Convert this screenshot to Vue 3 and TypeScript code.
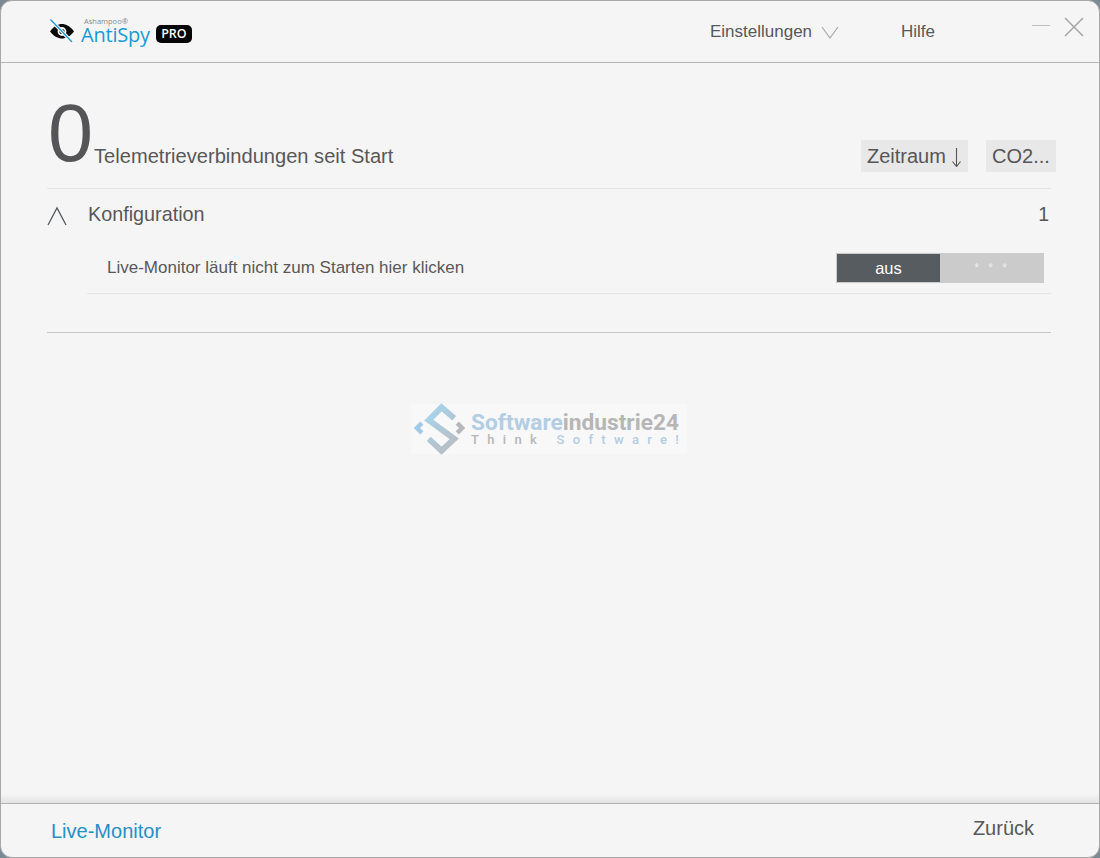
<script setup lang="ts">
const title = 'Telemetrieverbindungen seit Start'
</script>

<template>
  <div class="window">
    <header class="header">
      <div class="logo">
        <svg class="eye" width="26" height="26" viewBox="0 0 26 26">
          <path d="M1 13.500C5 8 9 6 13 6s8 2 12 7.500c-4 5-8 7-12 7S5 18.500 1 13.500Z" fill="#0b0b0b" />
          <circle cx="13" cy="13.500" r="4.400" fill="#f5f5f5" />
          <circle cx="13" cy="13.500" r="2.600" fill="#0b0b0b" />
          <path d="M1.500 1.500 23 24" stroke="#f5f5f5" stroke-width="3.500" />
          <path d="M1.500 1.500 23 24" stroke="#1b9ad6" stroke-width="1.300" />
        </svg>
        <div class="logo-text">
          <span class="brand">Ashampoo®</span>
          <span class="product">AntiSpy</span>
        </div>
        <span class="pro">PRO</span>
      </div>
      <nav class="nav">
        <span class="nav-item settings">Einstellungen
          <svg width="18" height="13" viewBox="0 0 18 13"><path d="M1 1l8 11 8-11" fill="none" stroke="#a9a9a9" stroke-width="1.200" /></svg>
        </span>
        <span class="nav-item">Hilfe</span>
      </nav>
      <div class="controls">
        <span class="minimize"></span>
        <svg width="20" height="20" viewBox="0 0 20 20"><path d="M1 1l18 18M19 1 1 19" fill="none" stroke="#a5a5a5" stroke-width="1.500" /></svg>
      </div>
    </header>

    <main class="main">
      <section class="summary">
        <span class="count">0</span>
        <span class="title">{{ title }}</span>
        <div class="actions">
          <button class="action zeitraum">Zeitraum
            <svg width="11" height="19" viewBox="0 0 11 19"><path d="M5.500 0v18M1.500 13.500l4 5 4-5" fill="none" stroke="#555558" stroke-width="1.100" /></svg>
          </button>
          <button class="action co2">CO2...</button>
        </div>
      </section>

      <section class="group">
        <div class="group-head">
          <svg class="caret" width="20" height="20" viewBox="0 0 20 20"><path d="M1 19 10 2l9 17" fill="none" stroke="#555a5d" stroke-width="1.300" /></svg>
          <span class="group-name">Konfiguration</span>
          <span class="group-count">1</span>
        </div>
        <div class="row">
          <span class="row-label">Live-Monitor läuft nicht zum Starten hier klicken</span>
          <div class="toggle">
            <span class="toggle-off">aus</span>
            <span class="toggle-on">* * *</span>
          </div>
        </div>
      </section>
      <div class="rule"></div>

      <div class="watermark">
        <svg width="54" height="52" viewBox="0 0 54 52">
          <defs>
            <linearGradient id="wm" gradientUnits="userSpaceOnUse" x1="8" y1="8" x2="44" y2="46">
              <stop offset="0" stop-color="#a6d6f0" />
              <stop offset="1" stop-color="#b8bcc0" />
            </linearGradient>
          </defs>
          <path d="M42 15 29 4 16 17 42 36 29 48 16 36" fill="none" stroke="url(#wm)" stroke-width="6" />
          <path d="M9 20 4 25l5 5" fill="none" stroke="#9fcbe6" stroke-width="4.500" />
          <path d="M45 20l5 5-5 5" fill="none" stroke="#b4b8bd" stroke-width="4.500" />
        </svg>
        <div class="wm-text">
          <div class="wm-line1"><span class="wm-blue">Software</span>industrie24</div>
          <div class="wm-line2">Think <span class="wm-blue">Software!</span></div>
        </div>
      </div>
    </main>

    <footer class="footer">
      <span class="live">Live-Monitor</span>
      <span class="back">Zurück</span>
    </footer>
  </div>
</template>

<style>
html, body { margin: 0; background: #7c8a94; }
</style>

<style scoped>
* { box-sizing: border-box; }
.window {
  position: relative;
  width: 1100px;
  height: 858px;
  display: flex;
  flex-direction: column;
  background: #f5f5f5;
  border: 1px solid #a8a8a8;
  border-radius: 12px;
  overflow: hidden;
  font-family: "Liberation Sans", Arial, sans-serif;
  color: #555558;
}
.header {
  height: 62px;
  flex: none;
  display: flex;
  align-items: flex-start;
  border-bottom: 1px solid #b4b4b4;
  padding: 17px 15px 0 48px;
}
.logo { display: flex; align-items: flex-start; width: 661px; }
.logo-text { display: flex; flex-direction: column; margin-left: 6px; margin-top: -1px; }
.brand { font-size: 7.500px; line-height: 8px; color: #8a8a8a; margin-left: 3px; font-family: "Open Sans", sans-serif; }
.product { font-size: 20px; line-height: 19px; color: #1b9ad6; font-family: "Open Sans", sans-serif; letter-spacing: -0.200px; }
.pro {
  margin: 7px 0 0 6px;
  width: 36px;
  height: 18px;
  background: #050505;
  border-radius: 5px;
  color: #fff;
  font-size: 12.500px;
  line-height: 18px;
  text-align: center;
  font-family: "Open Sans", sans-serif;
  font-weight: 600;
}
.nav { display: flex; font-size: 17px; width: 322px; color: #58585a; padding-top: 4px; }
.nav-item { line-height: 20px; }
.settings { display: flex; align-items: center; gap: 9px; width: 191px; }
.settings svg { margin-top: 1px; }
.controls { display: flex; gap: 14px; align-items: flex-start; margin-top: -1px; }
.minimize { width: 18px; height: 1px; background: #bdbdbd; margin-top: 8px; }
.main {
  position: relative;
  flex: 1;
  padding: 0 48px 0 46px;
  min-height: 0;
}
.summary {
  position: relative;
  height: 126px;
  display: flex;
  align-items: flex-end;
  border-bottom: 1px solid #e4e6e6;
  padding-bottom: 19px;
}
.count { font-size: 81px; line-height: 84px; color: #555558; margin-left: 1px; margin-bottom: -6px; }
.title { font-size: 20.100px; line-height: 22px; margin-left: 1px; margin-bottom: 2px; color: #58585a; }
.actions { margin-left: auto; display: flex; gap: 18px; margin-right: -5px; margin-bottom: -3px; }
.action {
  height: 32px;
  border: 0;
  padding: 0;
  background: #e8e8e8;
  color: #555558;
  font: 20px/32px "Liberation Sans", Arial, sans-serif;
  text-align: center;
}
.zeitraum {
  width: 107px;
  display: flex;
  align-items: center;
  gap: 5px;
  padding-left: 6px;
}
.zeitraum svg { margin-top: 2px; }
.co2 { width: 70px; }
.group-head { height: 51px; display: flex; align-items: center; }
.caret { margin: 2px 0 0 0; }
.group-name { font-size: 19.800px; margin-left: 21px; color: #58585a; }
.group-count { margin-left: auto; font-size: 19.500px; margin-right: 2px; }
.row {
  margin-left: 40px;
  height: 54px;
  display: flex;
  align-items: center;
  justify-content: space-between;
  padding: 0 7px 0 20px;
  border-bottom: 1px solid #e4e6e6;
}
.row-label { font-size: 17px; color: #58585a; margin-top: 3px; }
.toggle {
  width: 208px;
  height: 30px;
  display: flex;
  background: #cbcbcb;
  margin-top: 3px;
}
.toggle-off {
  width: 103px;
  margin: 1px 0 1px 1px;
  background: #565c5f;
  color: #fff;
  font-size: 16.500px;
  line-height: 28px;
  text-align: center;
}
.toggle-on {
  flex: 1;
  text-align: center;
  color: #eee;
  font-size: 12px;
  line-height: 30px;
  letter-spacing: 3px;
}
.rule { height: 1px; background: #c8c8c8; margin-top: 38px; }
.watermark {
  position: absolute;
  left: 410px;
  top: 341px;
  width: 276px;
  height: 50px;
  background: #f8f8f8;
  display: flex;
  align-items: center;
  padding-left: 2px;
  gap: 5px;
}
.wm-text { font-family: Roboto, sans-serif; color: #b6b6b6; font-weight: 700; }
.wm-line1 { font-size: 22.700px; line-height: 22px; white-space: nowrap; margin-top: -1px; }
.wm-line2 { font-size: 13px; line-height: 12px; letter-spacing: 8.300px; white-space: nowrap; font-weight: 500; }
.wm-blue { color: #b3cde3; }
.footer {
  position: relative;
  height: 54px;
  flex: none;
  display: flex;
  justify-content: space-between;
  border-top: 1px solid #b4b4b4;
  padding: 0 65px 0 50px;
}
.footer::before {
  content: "";
  position: absolute;
  left: 0;
  right: 0;
  top: -10px;
  height: 9px;
  background: linear-gradient(#f5f5f5, #e2e2e2);
}
.live { color: #2490c8; font-size: 20px; line-height: 54px; }
.back { color: #58585a; font-size: 20px; line-height: 48px; }
</style>
